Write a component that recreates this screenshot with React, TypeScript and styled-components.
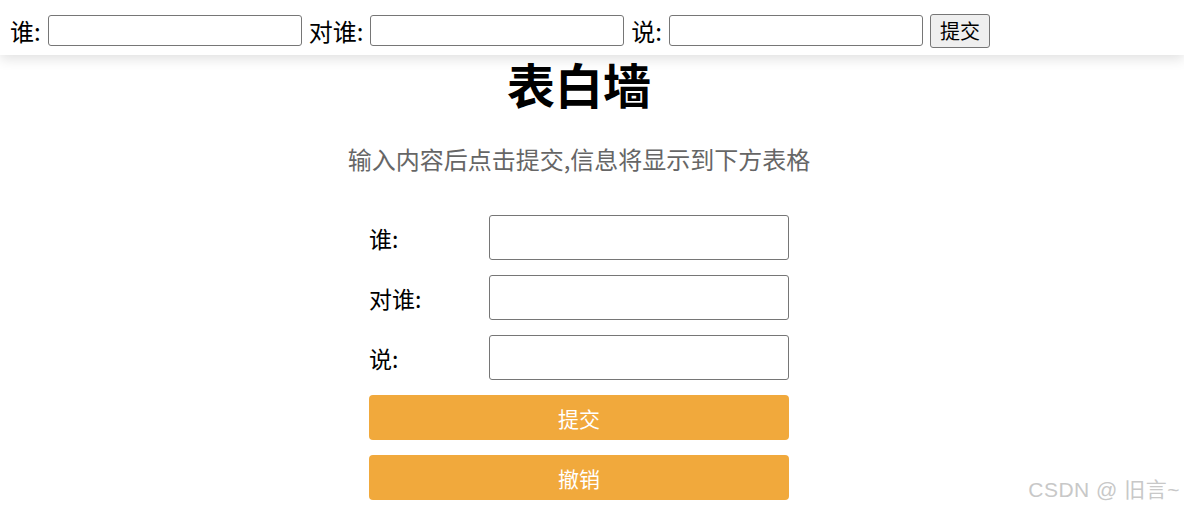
import React, { FunctionComponent } from 'react'
import styled, { createGlobalStyle } from 'styled-components'

const GlobalStyle = createGlobalStyle`
  html, body {
    margin: 0;
    padding: 0;
    background: #fff;
  }
  body {
    font-family: "Noto Sans CJK SC", "Liberation Sans", sans-serif;
    color: #000;
  }
`

const TopBar = styled.div`
  display: flex;
  align-items: center;
  gap: 7px;
  height: 55px;
  box-sizing: border-box;
  padding: 6px 10px 0;
  background: #fff;
  box-shadow: 0 4px 12px rgba(0, 0, 0, 0.12);
  font-size: 24px;
  position: relative;
  z-index: 1;
`

const TopLabel = styled.span`
  line-height: 1;
`

const TopInput = styled.input`
  width: 254px;
  height: 31px;
  box-sizing: border-box;
  border: 1px solid #767676;
  border-radius: 3px;
  padding: 0 3px;
  font-size: 20px;
`

const TopButton = styled.button`
  height: 34px;
  padding: 0 9px;
  font-family: "Noto Sans CJK SC", sans-serif;
  font-size: 20px;
  color: #000;
  background: #efefef;
  border: 1px solid #767676;
  border-radius: 3px;
`

const Main = styled.div`
  display: flex;
  flex-direction: column;
  align-items: center;
  width: 1158px;
`

const Title = styled.h1`
  margin: -2px 0 0;
  font-size: 48px;
  font-weight: 700;
  line-height: 60px;
`

const Subtitle = styled.p`
  margin: 30px 0 0;
  font-size: 24px;
  line-height: 32px;
  color: #666;
`

const Form = styled.div`
  display: flex;
  flex-direction: column;
  gap: 15px;
  width: 420px;
  margin-top: 40px;
`

const Row = styled.div`
  display: flex;
  align-items: center;
  height: 45px;
`

const Label = styled.span`
  width: 120px;
  font-size: 23px;
`

const Field = styled.input`
  width: 300px;
  height: 45px;
  box-sizing: border-box;
  border: 1px solid #767676;
  border-radius: 3px;
`

const ActionButton = styled.button`
  width: 420px;
  height: 45px;
  border: none;
  border-radius: 4px;
  background: #f1a93c;
  color: #fff;
  font-family: "Noto Sans CJK SC", sans-serif;
  font-size: 21px;
`

const Watermark = styled.div`
  position: absolute;
  right: 4px;
  bottom: 5px;
  font-family: "Liberation Sans", "Noto Sans CJK SC", sans-serif;
  font-size: 21px;
  letter-spacing: 0.5px;
  color: #c8c8c8;
`

const fields = ['谁:', '对谁:', '说:']

const App: FunctionComponent = () => {
  return (
    <>
      <GlobalStyle />
      <TopBar>
        <TopLabel>谁:</TopLabel>
        <TopInput type="text" />
        <TopLabel>对谁:</TopLabel>
        <TopInput type="text" />
        <TopLabel>说:</TopLabel>
        <TopInput type="text" />
        <TopButton>提交</TopButton>
      </TopBar>
      <Main>
        <Title>表白墙</Title>
        <Subtitle>输入内容后点击提交,信息将显示到下方表格</Subtitle>
        <Form>
          {fields.map((f) => (
            <Row key={f}>
              <Label>{f}</Label>
              <Field type="text" />
            </Row>
          ))}
          <ActionButton>提交</ActionButton>
          <ActionButton>撤销</ActionButton>
        </Form>
      </Main>
      <Watermark>CSDN @ 旧言~</Watermark>
    </>
  )
}

export default App
